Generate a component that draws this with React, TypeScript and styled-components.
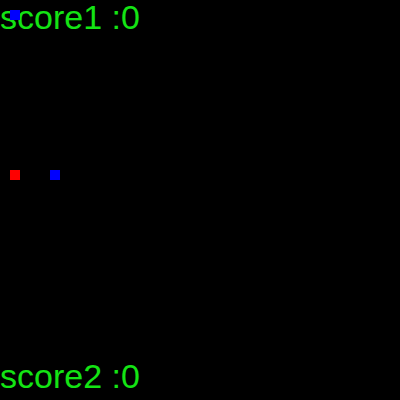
import React from "react";
import styled, { createGlobalStyle } from "styled-components";

const Global = createGlobalStyle`
  html, body { margin: 0; padding: 0; background: #000; }
  #root { width: 400px; height: 400px; }
`;

const Board = styled.div`
  position: relative;
  width: 400px;
  height: 400px;
  background: #000;
  display: flex;
  flex-direction: column;
  justify-content: space-between;
  padding-bottom: 7px;
  box-sizing: border-box;
  overflow: hidden;
`;

const Score = styled.div`
  font-family: "Liberation Sans", Arial, sans-serif;
  font-size: 34px;
  line-height: 34px;
  color: rgb(20, 228, 20);
  white-space: pre;
`;

const Block = styled.div<{ $color: string }>`
  position: absolute;
  width: 10px;
  height: 10px;
  background: ${(p) => p.$color};
`;

const entities = [
  { x: 10, y: 10, color: "#0000ff" },
  { x: 10, y: 170, color: "#ff0000" },
  { x: 50, y: 170, color: "#0000ff" },
];

export default function App() {
  return (
    <>
      <Global />
      <Board>
        <Score>score1 :0</Score>
        <Score>score2 :0</Score>
        {entities.map((e, i) => (
          <Block key={i} $color={e.color} style={{ left: e.x, top: e.y }} />
        ))}
      </Board>
    </>
  );
}
